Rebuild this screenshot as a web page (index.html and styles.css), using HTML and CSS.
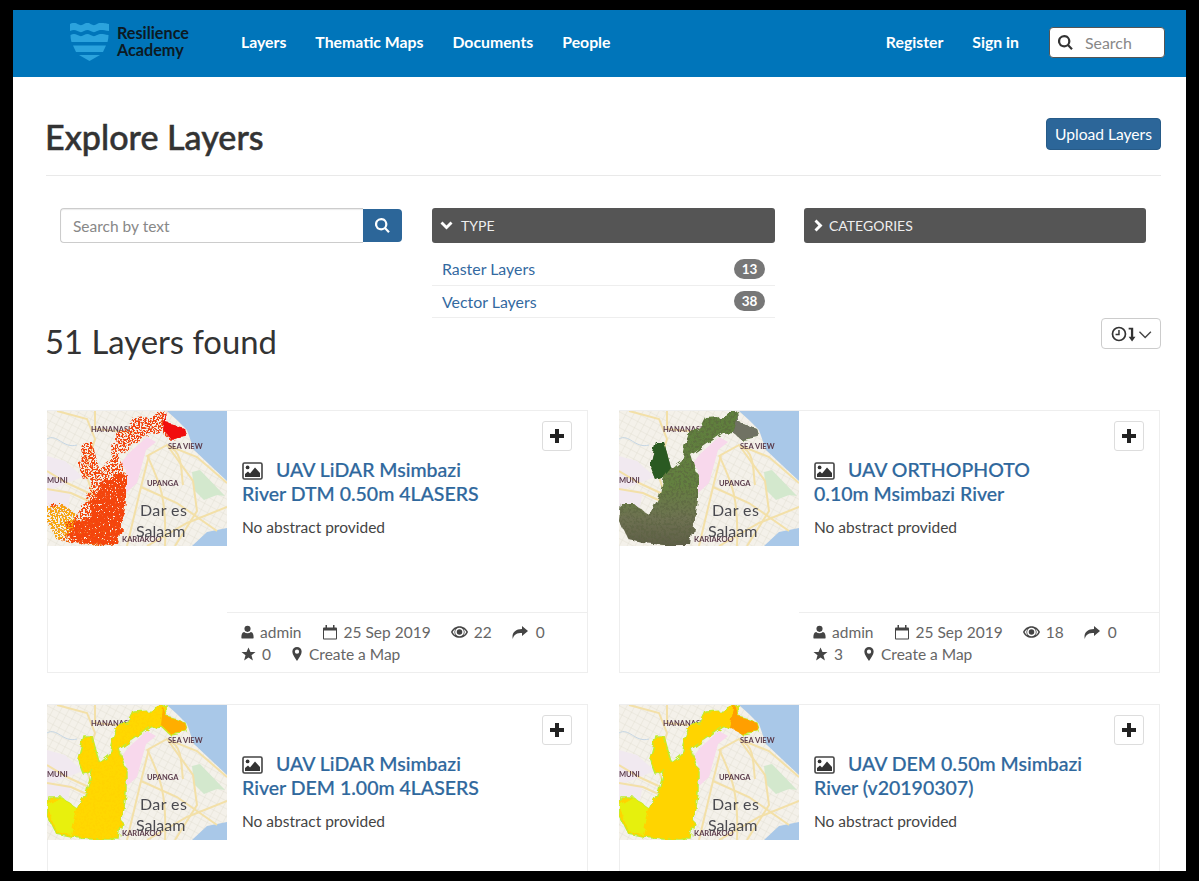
FILE: index.html
```html
<!DOCTYPE html>
<html lang="en">
<head>
<meta charset="utf-8">
<title>Explore Layers</title>
<link rel="stylesheet" href="styles.css">
</head>
<body>
<svg class="defs" aria-hidden="true">
  <defs>
    <filter id="speckle" x="-5%" y="-5%" width="110%" height="110%">
      <feTurbulence type="fractalNoise" baseFrequency="0.12" numOctaves="2" seed="3" result="w"/>
      <feDisplacementMap in="SourceGraphic" in2="w" scale="7" result="d"/>
      <feTurbulence type="fractalNoise" baseFrequency="0.6" numOctaves="2" seed="4" result="n"/>
      <feColorMatrix in="n" type="matrix" values="0 0 0 0 0 0 0 0 0 0 0 0 0 0 0 0 0 0 -14 7.6" result="m"/>
      <feComposite in="d" in2="m" operator="in"/>
    </filter>
    <filter id="dense" x="-5%" y="-5%" width="110%" height="110%">
      <feTurbulence type="fractalNoise" baseFrequency="0.12" numOctaves="2" seed="3" result="w"/>
      <feDisplacementMap in="SourceGraphic" in2="w" scale="7" result="d"/>
      <feTurbulence type="fractalNoise" baseFrequency="0.6" numOctaves="2" seed="9" result="n"/>
      <feColorMatrix in="n" type="matrix" values="0 0 0 0 0 0 0 0 0 0 0 0 0 0 0 0 0 0 -14 9.4" result="m"/>
      <feComposite in="d" in2="m" operator="in"/>
    </filter>
    <filter id="rough" x="-5%" y="-5%" width="110%" height="110%">
      <feTurbulence type="fractalNoise" baseFrequency="0.12" numOctaves="2" seed="3" result="w"/>
      <feDisplacementMap in="SourceGraphic" in2="w" scale="7"/>
    </filter>
    <filter id="grain" x="-5%" y="-5%" width="110%" height="110%">
      <feTurbulence type="fractalNoise" baseFrequency="0.12" numOctaves="2" seed="3" result="w"/>
      <feDisplacementMap in="SourceGraphic" in2="w" scale="7" result="d"/>
      <feTurbulence type="fractalNoise" baseFrequency="0.4" numOctaves="2" seed="7" result="n"/>
      <feColorMatrix in="n" type="matrix" values="0 0 0 0 0.1 0 0 0 0 0.12 0 0 0 0 0.05 0 0 0 -6 3.2" result="m"/>
      <feComposite in="m" in2="d" operator="in"/>
    </filter>
    <filter id="grain-warm" x="-5%" y="-5%" width="110%" height="110%">
      <feTurbulence type="fractalNoise" baseFrequency="0.12" numOctaves="2" seed="3" result="w"/>
      <feDisplacementMap in="SourceGraphic" in2="w" scale="7" result="d"/>
      <feTurbulence type="fractalNoise" baseFrequency="0.45" numOctaves="2" seed="11" result="n"/>
      <feColorMatrix in="n" type="matrix" values="0 0 0 0 1 0 0 0 0 .66 0 0 0 0 0 0 0 0 -6 3.2" result="m"/>
      <feComposite in="m" in2="d" operator="in"/>
    </filter>
    <linearGradient id="ortho" x1="0" y1="0" x2="0" y2="1">
      <stop offset="0" stop-color="#5f7f3e"/>
      <stop offset=".55" stop-color="#64803f"/>
      <stop offset=".8" stop-color="#6e7152"/>
      <stop offset="1" stop-color="#5f5f48"/>
    </linearGradient>
    <linearGradient id="hot" x1="0" y1="0" x2="0" y2="1">
      <stop offset="0" stop-color="#f2420c"/>
      <stop offset=".75" stop-color="#f4480a"/>
      <stop offset="1" stop-color="#f06a08"/>
    </linearGradient>
    <pattern id="streets" width="7" height="7" patternUnits="userSpaceOnUse" patternTransform="rotate(28)">
      <path d="M0 0H7M0 0V7" fill="none" stroke="#dcd8cc" stroke-width=".7"/>
    </pattern>
    <path id="river" d="M119 0L120 12L137 17L140 27L124 30L114 21L104 22L90 32L72 44L79 66L79 89L74 122L72 134L45 134L24 132L10 129L0 109L2 92L14 92L30 104L40 86L45 66L37 69L31 54L37 31L45 31L52 57L62 49L65 36L70 22L82 17L87 7L104 6Z"/>
    <symbol id="base" viewBox="0 0 180 135">
      <rect width="180" height="135" fill="#f4f1ea"/>
      <rect width="180" height="135" fill="url(#streets)"/>
      <path d="M74 52L82 42L100 26L109 31L99 39L90 72L79 82L79 59Z" fill="#f8d8ec"/>
      <path d="M0 45L18 50L36 66L0 80ZM0 78L24 80L20 100L0 100Z" fill="#f1e9f0"/>
      <path d="M145 61L153 59L178 85L170 84L157 89L147 79Z" fill="#d3e8cd"/>
      <path d="M120 0H180V70L147 39L140 19L130 9Z" fill="#a9c8e8"/>
      <path d="M145 135L160 121L180 117V135Z" fill="#a9c8e8"/>
      <g fill="none" stroke="#f3e0a8" stroke-width="2">
        <path d="M10 0L40 8L48 28L38 60L46 84L20 72L0 60"/>
        <path d="M48 0V18L90 22"/>
        <path d="M180 72L150 46L120 34L102 44L94 76L80 135"/>
        <path d="M120 34L146 70L150 100L128 135"/>
        <path d="M94 76L130 92L170 120"/>
        <path d="M180 96L140 112L100 135"/>
        <path d="M100 44C112 70 120 86 118 135"/>
        <path d="M0 78L24 82L46 92"/>
        <path d="M122 36C136 40 134 62 136 74"/>
      </g>
      <path d="M0 28C10 22 16 38 30 34" fill="none" stroke="#c5d6e4"/>
      <g class="map-label">
        <text x="44" y="21">HANANASI</text>
        <text x="121" y="38">SEA VIEW</text>
        <text x="100" y="75">UPANGA</text>
        <text x="0" y="72">MUNI</text>
      </g>
    </symbol>
    <symbol id="base-top" viewBox="0 0 180 135">
      <g class="map-label"><text x="75" y="131">KARIAKOO</text></g>
      <g class="map-city">
        <text class="city-wide" x="93" y="105">Dar es</text>
        <text x="89" y="126">Salaam</text>
      </g>
    </symbol>
    <symbol id="i-image" viewBox="0 0 21 18">
      <rect x="1" y="1" width="19" height="16" rx="1.5" fill="none" stroke="#444" stroke-width="1.6"/>
      <circle cx="5.6" cy="5.4" r="1.9" fill="#333"/>
      <path d="M3 15V12L6 9.5L8 11.5L13 5.5L18 11V15Z" fill="#333"/>
    </symbol>
    <symbol id="i-user" viewBox="0 0 14 14"><circle cx="7" cy="3.6" r="3.3"/><path d="M1 14C.6 14 .4 13.6.4 13C.4 9.8 1.2 7.4 3.4 7C4.4 7.9 5.6 8.3 7 8.3S9.6 7.9 10.6 7C12.8 7.4 13.6 9.8 13.6 13C13.6 13.6 13.4 14 13 14Z"/></symbol>
    <symbol id="i-cal" viewBox="0 0 15 15"><path d="M1.500 2.500H13.500C14 2.500 14.500 3 14.500 3.500V13.500C14.500 14 14 14.500 13.500 14.500H1.500C1 14.500 .5 14 .5 13.500V3.500C.5 3 1 2.500 1.500 2.500ZM1.500 5.500V13.500H13.500V5.500Z" fill-rule="evenodd"/><rect x="3" y="0" width="1.500" height="4"/><rect x="10.500" y="0" width="1.500" height="4"/></symbol>
    <symbol id="i-eye" viewBox="0 0 16 11"><path d="M8 0C11.600 0 14.600 2.200 16 5.500C14.600 8.800 11.600 11 8 11S1.400 8.800 0 5.500C1.400 2.200 4.400 0 8 0ZM8 1.400A4.100 4.100 0 1 0 8 9.600A4.100 4.100 0 1 0 8 1.400ZM1.500 5.500C2.200 6.800 3.200 7.900 4.400 8.600A5 5 0 0 1 4.400 2.400C3.200 3.100 2.200 4.200 1.500 5.500ZM14.500 5.500C13.800 4.200 12.800 3.100 11.600 2.400A5 5 0 0 1 11.600 8.600C12.800 7.900 13.800 6.800 14.500 5.500Z" fill-rule="evenodd"/><circle cx="8" cy="5.500" r="2.600"/></symbol>
    <symbol id="i-share" viewBox="0 0 16 13"><path d="M10 0L16 5L10 10V7C5 7 2 8 .8 13C-.6 7 3 3.200 10 3Z"/></symbol>
    <symbol id="i-star" viewBox="0 0 14 14"><path d="M7 .4L9 5H14L10 8.200L11.400 13.400L7 10.600L2.600 13.400L4 8.200L0 5H5Z"/></symbol>
    <symbol id="i-pin" viewBox="0 0 10 15"><path d="M5 0A5 5 0 0 1 10 5C10 8 7 11.500 5 15C3 11.500 0 8 0 5A5 5 0 0 1 5 0ZM5 2.700A2.300 2.300 0 1 0 5 7.300A2.300 2.300 0 1 0 5 2.700Z" fill-rule="evenodd"/></symbol>
    <symbol id="i-plus" viewBox="0 0 16 16"><path d="M6 1H10V6H15V10H10V15H6V10H1V6H6Z"/></symbol>
  </defs>
</svg>

<div class="frame">
  <nav class="navbar">
    <a class="brand">
      <svg class="brand-mark" viewBox="0 0 39 38" aria-hidden="true">
        <path class="brand-band" d="M0 1C3 -.5 5 -.5 7.500 1C10 2.500 12 2.500 14 1C16.500 -.5 18.500 -.5 20.500 1C23 2.500 25 2.500 27 1C29.500 -.5 32 -.5 39 1V8C32 6.500 29.500 6.500 27 8C25 9.500 23 9.500 20.500 8C18.500 6.500 16.500 6.500 14 8C12 9.500 10 9.500 7.500 8C5 6.500 3 6.500 0 8Z"/>
        <path class="brand-band" d="M.5 12C3 10.500 5 10.500 7.500 12C10 13.500 12 13.500 14 12C16.500 10.500 18.500 10.500 20.500 12C23 13.500 25 13.500 27 12C29.500 10.500 32 10.500 38.500 12C38.500 15 38 17 37.500 19H1.500C1 17 .5 15 .5 12Z"/>
        <path class="brand-band" d="M3 22.500H36L33 29H6Z"/>
        <path class="brand-band" d="M9 32H30L19.500 38Z"/>
      </svg>
      <span class="brand-text">Resilience<br>Academy</span>
    </a>
    <ul class="nav-links">
      <li>Layers</li>
      <li>Thematic Maps</li>
      <li>Documents</li>
      <li>People</li>
    </ul>
    <ul class="nav-links nav-right">
      <li>Register</li>
      <li>Sign in</li>
    </ul>
    <div class="nav-search">
      <svg class="nav-search-icon" viewBox="0 0 15 15" aria-hidden="true"><path d="M6.200 0A6.200 6.200 0 0 1 11.200 9.800L14.800 13.400L13.200 15L9.700 11.300A6.200 6.200 0 1 1 6.200 0ZM6.200 2.200A4 4 0 1 0 6.200 10.200A4 4 0 1 0 6.200 2.200Z" fill-rule="evenodd"/></svg>
      <span>Search</span>
    </div>
  </nav>

  <main class="content">
    <header class="page-head">
      <h1>Explore Layers</h1>
      <a class="btn-primary">Upload Layers</a>
    </header>

    <section class="filters">
      <div class="text-search">
        <div class="text-input">Search by text</div>
        <div class="text-btn">
          <svg viewBox="0 0 15 15" aria-hidden="true"><path d="M6.200 0A6.200 6.200 0 0 1 11.200 9.800L14.800 13.400L13.200 15L9.700 11.300A6.200 6.200 0 1 1 6.200 0ZM6.200 2.200A4 4 0 1 0 6.200 10.200A4 4 0 1 0 6.200 2.200Z" fill-rule="evenodd"/></svg>
        </div>
      </div>
      <div class="facet">
        <div class="facet-head">
          <svg class="chev" viewBox="0 0 13 13" aria-hidden="true"><path d="M.5 4.500L2.500 2.500L6.500 6.400L10.500 2.500L12.500 4.500L6.500 10.500Z"/></svg>
          TYPE
        </div>
        <ul class="facet-list">
          <li><a>Raster Layers</a><span class="badge">13</span></li>
          <li><a>Vector Layers</a><span class="badge">38</span></li>
        </ul>
      </div>
      <div class="facet">
        <div class="facet-head">
          <svg class="chev chev-right" viewBox="0 0 13 13" aria-hidden="true"><path d="M4.500 .5L2.500 2.500L6.400 6.500L2.500 10.500L4.500 12.500L10.500 6.500Z"/></svg>
          CATEGORIES
        </div>
      </div>
    </section>

    <section class="results-head">
      <h2>51 Layers found</h2>
      <div class="sort-btn">
        <svg viewBox="0 0 36 14" aria-hidden="true">
          <circle cx="7" cy="7" r="5.700" fill="none" stroke="#333" stroke-width="1.500"/>
          <path d="M7 3.500V7.500H4" fill="none" stroke="#333" stroke-width="1.300"/>
          <path d="M15.500 1.500H19.500V9.500H21.500L18.500 13.500L15.500 9.500H17.500V3H15.500Z" fill="#333"/>
          <path d="M25 5L30 10L35 5" fill="none" stroke="#444" stroke-width="1.200"/>
        </svg>
      </div>
    </section>

    <section class="cards">
      <article class="card">
        <svg class="thumb" viewBox="0 0 180 135" role="img" aria-label="Layer thumbnail">
          <use href="#base"/>
          <use href="#river" fill="url(#hot)" filter="url(#speckle)"/>
          <path d="M55 70L79 62L79 89L74 122L72 134L24 132L18 112L40 108Z" fill="#f44408" filter="url(#dense)"/>
          <path d="M0 96L14 92L30 104L26 122L10 129L0 109Z" fill="#f7a810" filter="url(#speckle)"/>
          <path d="M119 0L120 12L137 17L140 27L124 29L116 18Z" fill="#f10a0a" filter="url(#rough)"/>
          <use href="#base-top"/>
        </svg>
        <div class="card-body">
          <button class="add-btn" aria-label="Add"><svg><use href="#i-plus"/></svg></button>
          <div class="card-main">
            <h3><svg class="title-icon"><use href="#i-image"/></svg>UAV LiDAR Msimbazi<br>River DTM 0.50m 4LASERS</h3>
            <p>No abstract provided</p>
          </div>
          <ul class="meta">
            <li><svg class="ic-user"><use href="#i-user"/></svg>admin</li>
            <li><svg class="ic-cal"><use href="#i-cal"/></svg>25 Sep 2019</li>
            <li><svg class="ic-eye"><use href="#i-eye"/></svg>22</li>
            <li class="wide"><svg class="ic-share"><use href="#i-share"/></svg>0</li>
            <li><svg class="ic-star"><use href="#i-star"/></svg>0</li>
            <li class="tight"><svg class="ic-pin"><use href="#i-pin"/></svg>Create a Map</li>
          </ul>
        </div>
      </article>

      <article class="card">
        <svg class="thumb" viewBox="0 0 180 135" role="img" aria-label="Layer thumbnail">
          <use href="#base"/>
          <use href="#river" fill="url(#ortho)" filter="url(#rough)"/>
          <use href="#river" fill="#000" filter="url(#grain)" opacity=".5"/>
          <path d="M37 31L45 31L52 57L45 66L37 69L31 54Z" fill="#2c5a20" filter="url(#rough)"/>
          <path d="M119 0L120 12L137 17L140 27L124 29L114 22L118 10Z" fill="#6f7263" filter="url(#rough)"/>
          <use href="#base-top"/>
        </svg>
        <div class="card-body">
          <button class="add-btn" aria-label="Add"><svg><use href="#i-plus"/></svg></button>
          <div class="card-main">
            <h3><svg class="title-icon"><use href="#i-image"/></svg>UAV ORTHOPHOTO<br>0.10m Msimbazi River</h3>
            <p>No abstract provided</p>
          </div>
          <ul class="meta">
            <li><svg class="ic-user"><use href="#i-user"/></svg>admin</li>
            <li><svg class="ic-cal"><use href="#i-cal"/></svg>25 Sep 2019</li>
            <li><svg class="ic-eye"><use href="#i-eye"/></svg>18</li>
            <li class="wide"><svg class="ic-share"><use href="#i-share"/></svg>0</li>
            <li><svg class="ic-star"><use href="#i-star"/></svg>3</li>
            <li class="tight"><svg class="ic-pin"><use href="#i-pin"/></svg>Create a Map</li>
          </ul>
        </div>
      </article>

      <article class="card">
        <svg class="thumb" viewBox="0 0 180 135" role="img" aria-label="Layer thumbnail">
          <use href="#base"/>
          <use href="#river" fill="#ffd800" stroke="#bdee30" stroke-width="1.500" filter="url(#rough)"/>
          <use href="#river" filter="url(#grain-warm)"/>
          <path d="M0 100L14 92L30 104L24 130L10 127Z" fill="#e8f010" filter="url(#rough)"/>
          <path d="M116 2L120 12L137 17L140 27L124 29L114 20Z" fill="#ffae00" filter="url(#rough)"/>
          <use href="#base-top"/>
        </svg>
        <div class="card-body">
          <button class="add-btn" aria-label="Add"><svg><use href="#i-plus"/></svg></button>
          <div class="card-main">
            <h3><svg class="title-icon"><use href="#i-image"/></svg>UAV LiDAR Msimbazi<br>River DEM 1.00m 4LASERS</h3>
            <p>No abstract provided</p>
          </div>
        </div>
      </article>

      <article class="card">
        <svg class="thumb" viewBox="0 0 180 135" role="img" aria-label="Layer thumbnail">
          <use href="#base"/>
          <use href="#river" fill="#ffd400" stroke="#bdee30" stroke-width="1.500" filter="url(#rough)"/>
          <use href="#river" filter="url(#grain-warm)"/>
          <path d="M0 100L14 92L30 104L24 130L10 127Z" fill="#e6f010" filter="url(#rough)"/>
          <path d="M116 0L120 12L137 17L140 27L124 29L110 22Z" fill="#ff9f00" filter="url(#rough)"/>
          <use href="#base-top"/>
        </svg>
        <div class="card-body">
          <button class="add-btn" aria-label="Add"><svg><use href="#i-plus"/></svg></button>
          <div class="card-main">
            <h3><svg class="title-icon"><use href="#i-image"/></svg>UAV DEM 0.50m Msimbazi<br>River (v20190307)</h3>
            <p>No abstract provided</p>
          </div>
        </div>
      </article>
    </section>
  </main>
</div>
</body>
</html>
```
FILE: styles.css
```css
* { box-sizing: border-box; }
html, body { height: 100%; }
body {
  margin: 0;
  padding: 10px 13px;
  background: #000;
  overflow: hidden;
  font-family: Lato, "Liberation Sans", sans-serif;
  font-size: 15.5px;
  color: #333;
}
ul { list-style: none; margin: 0; padding: 0; }
.defs { position: absolute; width: 0; height: 0; }

.frame {
  height: 861px;
  background: #fff;
  overflow: hidden;
}

/* navbar */
.navbar {
  height: 67px;
  background: #0075ba;
  display: flex;
  align-items: center;
  padding: 0 21px 0 57px;
}
.brand { display: flex; align-items: center; gap: 8px; width: 171px; margin-bottom: 5px; }
.brand-mark { width: 39px; height: 38px; flex: none; margin-top: 2px; }
.brand-band { fill: #2ba3dd; }
.brand-text {
  font-size: 16.2px;
  line-height: 17px;
  font-weight: 700;
  color: #0c1a24;
}
.nav-links {
  display: flex;
  gap: 29px;
  color: #fff;
  font-weight: 700;
  font-size: 15.8px;
  margin-bottom: 4px;
}
.nav-right { margin-left: auto; margin-right: 30px; }
.nav-search {
  width: 116px;
  height: 31px;
  margin-bottom: 2px;
  background: #fff;
  border: 1px solid #555;
  border-radius: 4px;
  display: flex;
  align-items: center;
  gap: 12px;
  padding-left: 8px;
  color: #888;
  font-size: 15.9px;
}
.nav-search-icon { width: 15px; height: 15px; fill: #333; }

/* page head */
.content { padding: 0 25px 0 33px; }
.page-head {
  height: 99px;
  border-bottom: 1px solid #e9e9e9;
  display: flex;
  align-items: flex-start;
  justify-content: space-between;
  padding-top: 41px;
}
h1 {
  margin: 0 0 0 -1px;
  font-size: 34.1px;
  line-height: 38px;
  font-weight: 500;
  color: #333;
  -webkit-text-stroke: .5px #333;
}
.btn-primary {
  width: 115px;
  height: 32px;
  background: #2c6699;
  border: 1px solid #275b88;
  border-radius: 4px;
  color: #fff;
  font-size: 15.6px;
  display: flex;
  align-items: center;
  justify-content: center;
}

/* filters */
.filters {
  display: grid;
  grid-template-columns: 342px 343px 342px;
  column-gap: 29px;
  padding: 32px 0 0 14px;
  align-items: start;
}
.facet { position: relative; left: 1px; }
.text-search { display: flex; height: 35px; }
.text-input {
  flex: 1;
  border: 1px solid #ccc;
  border-right: 0;
  border-radius: 4px 0 0 4px;
  box-shadow: inset 0 1px 1px rgba(0, 0, 0, .08);
  padding: 0 12px;
  color: #888;
  display: flex;
  align-items: center;
}
.text-btn {
  width: 39px;
  background: #2c6699;
  border-radius: 0 4px 4px 0;
  display: flex;
  align-items: center;
  justify-content: center;
  margin-top: 1px;
  height: 33px;
}
.text-btn svg { width: 15px; height: 15px; fill: #fff; }
.facet-head {
  height: 35px;
  background: #555;
  border-radius: 3px;
  color: #eee;
  font-size: 14px;
  display: flex;
  align-items: center;
  gap: 8px;
  padding-left: 8px;
}
.chev { width: 13px; height: 13px; fill: #fff; }
.chev-right { margin-right: -4px; }
.facet-list { padding-top: 10px; }
.facet-list li {
  height: 32.5px;
  border-bottom: 1px solid #eee;
  display: flex;
  align-items: center;
  justify-content: space-between;
  padding: 0 10px;
  font-size: 15.9px;
  color: #33699f;
}
.badge {
  width: 31px;
  height: 20px;
  border-radius: 10px;
  background: #777;
  color: #fff;
  font-size: 13.5px;
  font-weight: 700;
  display: flex;
  align-items: center;
  justify-content: center;
}

/* result heading */
.results-head {
  display: flex;
  justify-content: space-between;
  align-items: flex-start;
  height: 92px;
}
h2 { margin: 4px 0 0 -1px; font-size: 32.8px; line-height: 40px; font-weight: 400; color: #333; }
.sort-btn {
  width: 60px;
  height: 31px;
  background: #fff;
  border: 1px solid #ccc;
  border-radius: 4px;
  display: flex;
  align-items: center;
  justify-content: center;
}
.sort-btn svg { width: 41px; height: 16px; }

/* cards */
.cards {
  display: grid;
  grid-template-columns: 541px 541px;
  grid-auto-rows: 263px;
  column-gap: 31px;
  row-gap: 31px;
  padding-left: 1px;
  margin-right: -2px;
}
.card {
  border: 1px solid #eee;
  display: flex;
  align-items: flex-start;
  height: 263px;
}
.thumb { width: 180px; height: 135px; flex: none; margin-left: -1px; filter: blur(.35px); }
.map-label text { font: 700 7.500px Lato, sans-serif; fill: #5b3c4c; }
.map-city text { font: 400 16px Lato, sans-serif; fill: #4a4a50; }
.map-city .city-wide { letter-spacing: .4px; }
.card-body {
  position: relative;
  flex: 1;
  height: 261px;
  display: flex;
  flex-direction: column;
}
.add-btn {
  position: absolute;
  top: 10px;
  right: 15px;
  width: 30px;
  height: 30px;
  padding: 0;
  background: #fff;
  border: 1px solid #ddd;
  border-radius: 3px;
  display: flex;
  align-items: center;
  justify-content: center;
}
.add-btn svg { width: 16px; height: 16px; fill: #222; }
.card-main { flex: 1; padding: 47px 40px 0 15px; }
h3 {
  margin: 0;
  font-size: 19.5px;
  line-height: 24px;
  font-weight: 500;
  color: #2f689d;
  -webkit-text-stroke: .2px #2f689d;
}
.title-icon { width: 21px; height: 18px; margin-right: 13px; vertical-align: -3px; }
.card-main p { margin: 10px 0 0; font-size: 15.5px; line-height: 22px; color: #444; }
.meta {
  height: 60px;
  border-top: 1px solid #eee;
  padding: 8px 15px 0 14px;
  display: flex;
  flex-wrap: wrap;
  align-content: flex-start;
  column-gap: 20px;
  color: #666;
  line-height: 22px;
}
.meta li { display: flex; align-items: center; gap: 6px; }
.meta li.tight { gap: 7px; margin-left: 1px; }
.meta li.wide { gap: 8px; }
.meta svg { fill: #444; flex: none; }
.ic-user { width: 13px; height: 14px; }
.ic-cal { width: 16px; height: 15px; }
.ic-eye { width: 17px; height: 12px; }
.ic-share { width: 16px; height: 13px; }
.ic-star { width: 15px; height: 14px; }
.ic-pin { width: 10px; height: 14px; }
```
